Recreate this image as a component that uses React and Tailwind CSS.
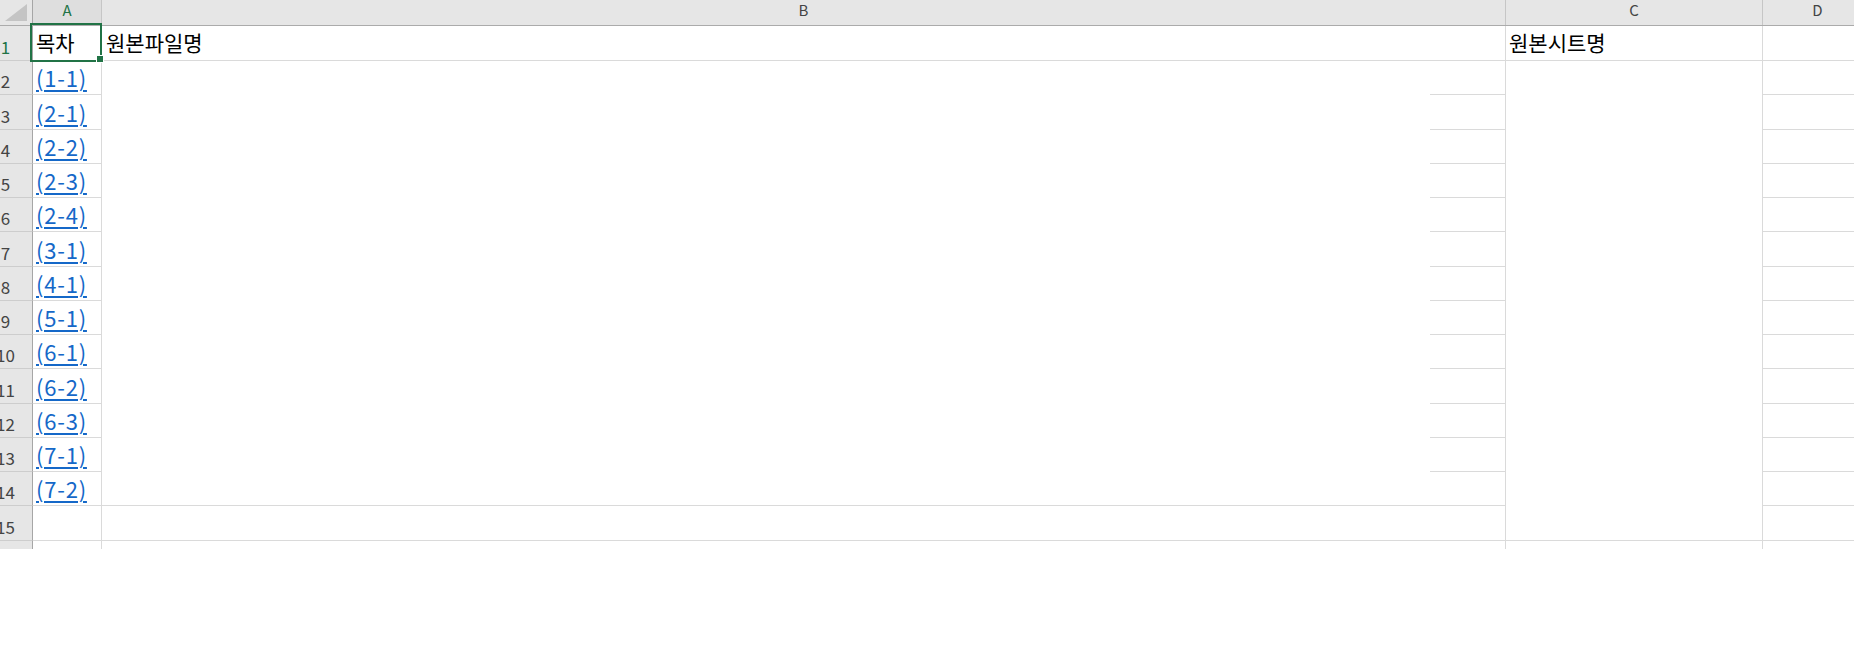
import React from 'react';

const links = ['(1-1)', '(2-1)', '(2-2)', '(2-3)', '(2-4)', '(3-1)', '(4-1)', '(5-1)', '(6-1)', '(6-2)', '(6-3)', '(7-1)', '(7-2)'];
// row heights (border included) for rows 2..14
const heights = [34, 35, 34, 34, 34, 35, 34, 34, 34, 35, 34, 34, 34];

const font = { fontFamily: '"Noto Sans CJK KR", "Noto Sans", sans-serif' };

const RowHead = ({ n, active }) => (
    <div className={`w-[54px] shrink-0 flex items-end justify-center pb-[5px] bg-[#e6e6e6] border-r border-r-[#a6a6a6] border-b border-b-[#cdcdcd] text-[17px] leading-none ${active ? 'text-[#217346]' : 'text-[#444]'}`}>
        {n}
    </div>
);

const App = () => {
    return (
        <div className="w-[1854px] h-[667px] bg-white overflow-hidden" style={font}>
            <div className="ml-[-21px] w-[1900px]">
                {/* column headers */}
                <div className="flex h-[26px] bg-[#e6e6e6] border-b border-b-[#ababab]">
                    <div className="w-[54px] shrink-0 border-r border-r-[#a6a6a6] flex items-end justify-end pr-[5px] pb-[4px]">
                        <svg width="22" height="17" viewBox="0 0 22 17">
                            <polygon points="22,0 22,17 0,17" fill="#c4c4c4" />
                        </svg>
                    </div>
                    <div className="w-[69px] shrink-0 border-r border-r-[#c6c6c6] text-center text-[15px] leading-none pt-[2px] text-[#217346] bg-[#dedede]">A</div>
                    <div className="w-[1404px] shrink-0 border-r border-r-[#c6c6c6] text-center text-[15px] leading-none pt-[2px] text-[#444]">B</div>
                    <div className="w-[257px] shrink-0 border-r border-r-[#c6c6c6] text-center text-[15px] leading-none pt-[2px] text-[#444]">C</div>
                    <div className="w-[110px] shrink-0 border-r border-r-[#c6c6c6] text-center text-[15px] leading-none pt-[2px] text-[#444]">D</div>
                </div>

                {/* row 1 */}
                <div className="flex h-[35px]">
                    <RowHead n={1} active />
                    <div className="relative w-[69px] shrink-0 border-r border-b border-[#dadada] flex items-end pl-[3px] pb-[7px] text-[21px] leading-none text-black">
                        목차
                        <div className="absolute left-[-3px] top-[-3px] w-[72px] h-[39px] border-2 border-[#217346]"></div>
                        <div className="absolute right-[-3px] bottom-[-3px] w-[6px] h-[6px] bg-[#217346] border border-white box-content"></div>
                    </div>
                    <div className="w-[1404px] shrink-0 border-r border-b border-[#dadada] flex items-end pl-[4px] pb-[7px] text-[21px] leading-none text-black">원본파일명</div>
                    <div className="w-[257px] shrink-0 border-r border-b border-[#dadada] flex items-end pl-[3px] pb-[7px] text-[21px] leading-none text-black">원본시트명</div>
                    <div className="w-[110px] shrink-0 border-r border-b border-[#dadada]"></div>
                </div>

                {/* rows 2..14 */}
                {links.map((label, i) => {
                    const last = i === links.length - 1;
                    return (
                        <div key={label + i} className="flex" style={{ height: heights[i] }}>
                            <RowHead n={i + 2} />
                            <div className="w-[69px] shrink-0 border-r border-b border-[#dadada] flex items-end pl-[3px] pb-[6px]">
                                <span className="text-[22px] tracking-[0.8px] leading-none text-[#1568c8] underline underline-offset-[3px] decoration-[1.5px]">{label}</span>
                            </div>
                            {last ? (
                                <div className="w-[1404px] shrink-0 border-r border-b border-[#dadada]"></div>
                            ) : (
                                <div className="w-[1404px] shrink-0 border-r border-[#dadada] flex flex-col">
                                    <div className="flex-1"></div>
                                    <div className="ml-auto mr-[-3px] w-[78px] h-px bg-[#dadada]"></div>
                                </div>
                            )}
                            <div className="w-[257px] shrink-0 border-r border-[#dadada] flex flex-col">
                                <div className="flex-1"></div>
                                <div className="h-px bg-white"></div>
                            </div>
                            <div className="w-[110px] shrink-0 border-r border-b border-[#dadada]"></div>
                        </div>
                    );
                })}

                {/* row 15 */}
                <div className="flex h-[35px]">
                    <RowHead n={15} />
                    <div className="w-[69px] shrink-0 border-r border-b border-[#dadada]"></div>
                    <div className="w-[1404px] shrink-0 border-r border-b border-[#dadada]"></div>
                    <div className="w-[257px] shrink-0 border-r border-b border-[#dadada]"></div>
                    <div className="w-[110px] shrink-0 border-r border-b border-[#dadada]"></div>
                </div>

                {/* row 16, cut off */}
                <div className="flex h-[8px]">
                    <div className="w-[54px] shrink-0 bg-[#e6e6e6] border-r border-r-[#a6a6a6]"></div>
                    <div className="w-[69px] shrink-0 border-r border-[#dadada]"></div>
                    <div className="w-[1404px] shrink-0 border-r border-[#dadada]"></div>
                    <div className="w-[257px] shrink-0 border-r border-[#dadada]"></div>
                    <div className="w-[110px] shrink-0 border-r border-[#dadada]"></div>
                </div>
            </div>
        </div>
    );
};

export default App;
